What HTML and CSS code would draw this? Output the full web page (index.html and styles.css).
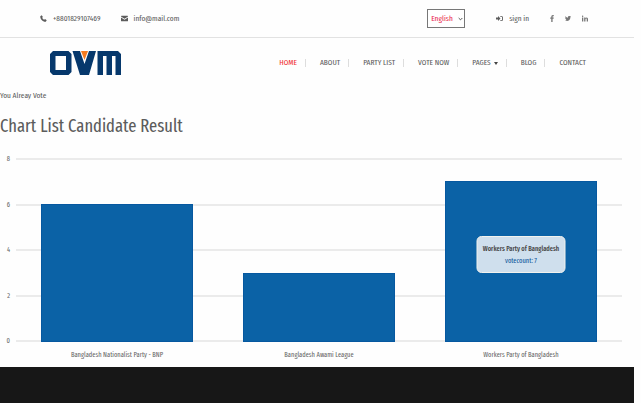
FILE: index.html
```html
<!DOCTYPE html>
<html lang="en">
<head>
<meta charset="utf-8">
<title>OVM - Chart List Candidate Result</title>
<link rel="stylesheet" href="styles.css">
</head>
<body>
<header>
  <div class="topbar">
    <div class="contact">
      <a class="contact-item" href="#">
        <svg class="icon" viewBox="0 0 12 12" aria-hidden="true"><path d="M3 .5 .5 2C0 7 5 12 10 11.500L11.500 9 8.600 6.800 7.100 8.300C5.600 7.600 4.400 6.400 3.700 4.900L5 3.400Z"/></svg>
        <span>+8801829107469</span>
      </a>
      <a class="contact-item" href="#">
        <svg class="icon" viewBox="0 0 14 12" aria-hidden="true"><path d="M0 1.500Q0 .5 1 .5H13Q14 .5 14 1.500V2L7 6.500 0 2ZM0 4 7 8.500 14 4V10.500Q14 11.500 13 11.500H1Q0 11.500 0 10.500Z"/></svg>
        <span>info@mail.com</span>
      </a>
    </div>
    <div class="tools">
      <div class="language">
        <select aria-label="Language"><option>English</option></select>
        <svg class="chevron" viewBox="0 0 6 4" aria-hidden="true"><path d="M.8.8 3 3 5.200.8"/></svg>
      </div>
      <a class="signin" href="#">
        <svg class="icon" viewBox="0 0 14 12" aria-hidden="true"><path d="M0 4H4V1L9 6 4 11V8H0ZM8.500 1H11Q14 1 14 4V8Q14 11 11 11H8.500V9.500H11Q12.200 9.500 12.200 8V4Q12.200 2.500 11 2.500H8.500Z"/></svg>
        <span>sign in</span>
      </a>
      <div class="social">
        <a href="#" aria-label="Facebook"><svg viewBox="0 0 6 12" class="social-f"><path d="M6 0V2H4.800Q4 2 4 3V4.300H6L5.700 6.300H4V12H1.700V6.300H0V4.300H1.700V2.800Q1.700 0 4.400 0Z"/></svg></a>
        <a href="#" aria-label="Twitter"><svg viewBox="0 0 14 12" class="social-t"><path d="M14 1.800 12.600 3.200C12.700 8 9 12 4.400 12 2.700 12 1.200 11.500 0 10.700 1.600 10.800 3 10.400 4.200 9.500 2.900 9.400 1.900 8.600 1.500 7.500H2.700C1.300 7.100.500 6 .5 4.600L1.700 4.900C.5 4 .1 2.300.9 1 2.400 2.800 4.500 3.900 6.900 4 6.300 1.600 8 0 9.800 0 10.600 0 11.400.3 11.900.9L13.700.2 12.500 1.900Z"/></svg></a>
        <a href="#" aria-label="LinkedIn"><svg viewBox="0 0 12 12" class="social-l"><path d="M0 4H2.600V12H0ZM1.300 0A1.400 1.400 0 1 1 1.290 0ZM4.300 4H6.800V5.100C7.300 4.300 8.100 3.800 9.200 3.800 11.300 3.800 12 5.200 12 7.300V12H9.400V7.800C9.400 6.700 9.200 6 8.300 6 7.300 6 6.900 6.800 6.900 7.900V12H4.300Z"/></svg></a>
      </div>
    </div>
  </div>
  <div class="mainbar">
    <a class="logo" href="#" aria-label="OVM">
      <svg viewBox="0 0 71 24" aria-hidden="true">
        <path fill="#06386c" fill-rule="evenodd" d="M3 0H18.500L21.500 3V21L18.500 24H3L0 21V3ZM5.500 5V19H16V5Z"/>
        <path fill="#06386c" d="M22.500 0H30L34.500 13 39 0H46L39 24H30Z"/>
        <path fill="#f47b20" d="M31 0H38L34.500 9Z"/>
        <path fill="#06386c" d="M47.500 0H68L71 3V24H65.500V5H62V24H56.500V5H53V24H47.500Z"/>
      </svg>
    </a>
    <nav aria-label="Main">
      <ul>
        <li><a class="active" href="#">HOME</a></li>
        <li><a href="#">ABOUT</a></li>
        <li><a href="#">PARTY LIST</a></li>
        <li><a href="#">VOTE NOW</a></li>
        <li><a class="dropdown" href="#">PAGES</a></li>
        <li><a href="#">BLOG</a></li>
        <li><a href="#">CONTACT</a></li>
      </ul>
    </nav>
  </div>
</header>
<main>
  <p class="notice">You Alreay Vote</p>
  <h1>Chart List Candidate Result</h1>
  <div class="chart">
    <div class="axis"><span>8</span><span>6</span><span>4</span><span>2</span><span>0</span></div>
    <div class="gridlines"><i></i><i></i><i></i><i></i><i></i></div>
    <div class="bars">
      <div class="bar" style="height:75%"></div>
      <div class="bar" style="height:37.5%"></div>
      <div class="bar" style="height:87.5%">
        <div class="tooltip"><strong>Workers Party of Bangladesh</strong><span>votecount: 7</span></div>
      </div>
    </div>
    <div class="labels">
      <span>Bangladesh Nationalist Party - BNP</span>
      <span>Bangladesh Awami League</span>
      <span>Workers Party of Bangladesh</span>
    </div>
  </div>
</main>
<footer></footer>
</body>
</html>
```
FILE: styles.css
```css
* { box-sizing: border-box; }
html { min-height: 100%; display: flex; }
body {
  flex: 1;
  display: flex;
  flex-direction: column;
  margin: 0 7px 0 0;
  background: #fefefe;
  color: #5c5c5c;
  font: 8px/12px "Fira Sans Extra Condensed", "Open Sans Condensed", "Liberation Sans Narrow", sans-serif;
}
a { color: inherit; text-decoration: none; }
svg { display: block; fill: currentColor; }

.topbar {
  display: flex;
  justify-content: space-between;
  align-items: center;
  height: 38px;
  padding: 0 46px 0 40px;
  border-bottom: 1px solid #e2e2e2;
}
.contact, .tools, .contact-item, .signin, .social { display: flex; align-items: center; }
.contact { gap: 20px; }
.contact-item, .signin { gap: 6px; }
.icon { width: 7px; height: 7px; }
.language { position: relative; margin-right: 31px; }
.language select {
  display: block;
  appearance: none;
  width: 38px;
  height: 19px;
  padding: 0 0 0 3px;
  border: 1px solid #777;
  border-radius: 0;
  background: #fff;
  color: #e8274b;
  font: inherit;
}
.chevron {
  position: absolute;
  right: 2px;
  top: 8px;
  width: 5px;
  height: 4px;
  fill: none;
  stroke: #333;
  pointer-events: none;
}
.signin { margin-right: 21px; }
.social { gap: 11px; color: #777; }
.social svg { height: 7px; }
.social-f { width: 4px; }
.social-t, .social-l { width: 6px; }

.mainbar {
  display: flex;
  justify-content: space-between;
  align-items: center;
  height: 50px;
  padding: 0 48px 0 50px;
}
.logo svg { width: 71px; height: 24px; }
nav ul { display: flex; margin: 0; padding: 0; list-style: none; }
nav li { display: flex; align-items: center; }
nav li + li::before {
  content: "";
  width: 1px;
  height: 8px;
  margin: 0 14px 0 8px;
  background: #ddd;
}
.active { color: #f03030; }
.dropdown { display: flex; align-items: center; gap: 3px; }
.dropdown::after {
  content: "";
  border: 2px solid transparent;
  border-top: 3px solid #444;
  border-bottom: 0;
}

.notice { margin: 2px 0 0; }
h1 { margin: 12px 0 20px; font-size: 18px; line-height: 24px; font-weight: 400; }

.chart {
  display: grid;
  grid-template: 184px 25px / 10px 1fr;
  column-gap: 6px;
  margin-right: 12px;
  font-size: 7px;
}
.axis, .gridlines { display: flex; flex-direction: column; justify-content: space-between; }
.axis { margin: -5px 0; text-align: right; }
.gridlines, .bars { grid-area: 1 / 2; }
.gridlines i { height: 2px; background: #ebebeb; }
.bars, .labels { display: grid; grid-template-columns: repeat(3, 1fr); }
.bars { align-items: end; justify-items: center; }
.bar {
  position: relative;
  width: 75%;
  border: 1px solid #0658a0;
  background: #0b62a6;
}
.labels { grid-area: 2 / 2; align-items: center; text-align: center; white-space: nowrap; }
.axis, .labels { color: #666; }
.tooltip {
  position: absolute;
  left: 50%;
  top: 54px;
  display: grid;
  align-content: center;
  width: 89px;
  height: 37px;
  transform: translateX(-50%);
  border: 1px solid #f2f2ee;
  border-radius: 5px;
  background: #cfdfed;
  text-align: center;
  white-space: nowrap;
  color: #0b559a;
}
.tooltip strong { color: #444; font-weight: 500; }

footer { flex: 1; min-height: 36px; background: #171717; }
```
